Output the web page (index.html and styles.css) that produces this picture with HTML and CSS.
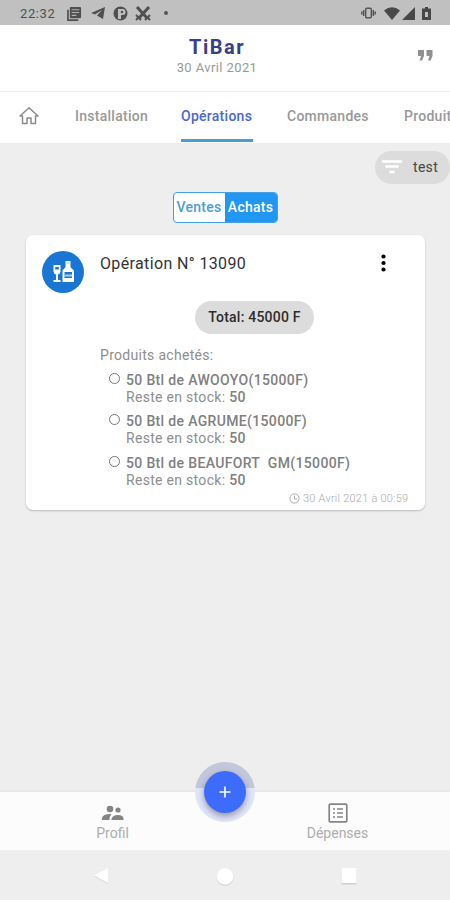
FILE: index.html
```html
<!DOCTYPE html>
<html lang="fr">
<head>
<meta charset="utf-8">
<title>TiBar</title>
<link rel="stylesheet" href="styles.css">
</head>
<body>
<div class="status">
  <span class="clock">22:32</span>
  <svg class="st-news" width="15" height="15" viewBox="0 0 16 16"><path d="M1 4v11h11" fill="none" stroke="#505050" stroke-width="1.800"/><rect x="3" y="1" width="12" height="12" rx="1" fill="#505050"/><path d="M5 4h8M5 7h8M5 10h5" stroke="#b0b0b0" stroke-width="1.100"/></svg>
  <svg class="st-plane" width="16" height="14" viewBox="0 0 16 14"><path d="M15 1 1 7l4 1.500L12 4 7 9.500l6 3.500z" fill="#505050"/></svg>
  <svg class="st-p" width="15" height="15" viewBox="0 0 15 15"><circle cx="7.500" cy="7.500" r="7" fill="#505050"/><path d="M5 3h4.500a2.600 2.600 0 0 1 0 6H8v4H5z" fill="#c0c0c0"/><circle cx="9" cy="6" r="1.300" fill="#505050"/></svg>
  <svg class="st-x" width="16" height="15" viewBox="0 0 16 15"><path d="m2 1 10 11M14 1 4 12" stroke="#505050" stroke-width="3"/><path d="m1 9 5 5M10 14l5-5M1 14l3-3M15 14l-3-3" stroke="#505050" stroke-width="2"/></svg>
  <i class="st-dot"></i>
  <span class="grow"></span>
  <svg class="st-vib" width="15" height="12" viewBox="0 0 15 12"><rect x="4.700" y="1.200" width="5.600" height="9.600" rx="1" fill="none" stroke="#555" stroke-width="1.400"/><path d="M2.700 3v6M.8 4.500v3M12.300 3v6M14.200 4.500v3" stroke="#555" stroke-width="1.500"/></svg>
  <svg class="st-wifi" width="16" height="13" viewBox="0 0 16 13"><path d="M0 3.500Q8-3 16 3.500L8 13z" fill="#484848"/></svg>
  <svg class="st-cell" width="13" height="13" viewBox="0 0 13 13"><path d="M13 0v13H0z" fill="#484848"/></svg>
  <svg class="st-bat" width="9" height="13" viewBox="0 0 9 13"><path d="M3 0h3v1.500h3V13H0V1.500h3z" fill="#484848"/><path d="M3 5h3v5H3z" fill="#c0c0c0"/></svg>
</div>
<header class="header">
  <div class="titles"><h1>TiBar</h1><p>30 Avril 2021</p></div>
  <svg class="quote" width="16" height="11" viewBox="0 0 16 11"><path d="M1 0h6v6L5 10.500H2.500L4 6H1zM9.500 0h6v6l-2 4.500H11L12.500 6h-3z" fill="#909090"/></svg>
</header>
<nav class="tabs">
  <svg class="home" width="20" height="19" viewBox="0 0 20 19"><path d="M1 10 10 1.700 19 10h-2.500v7.500H12V12H8v5.500H3.500V10z" fill="none" stroke="#8b8b8b" stroke-width="1.500" stroke-linejoin="round"/></svg>
  <a class="t-inst">Installation</a><a class="t-ops">Opérations</a><a class="t-com">Commandes</a><a class="t-prod">Produits</a>
</nav>
<main class="content">
  <div class="chip">
    <svg width="20" height="14" viewBox="0 0 20 14"><path d="M0 1.500h20M3.500 6.500h13M7.500 12h5" stroke="#fff" stroke-width="2.400"/></svg>
    <span>test</span>
  </div>
  <div class="segment"><span class="seg">Ventes</span><span class="seg on">Achats</span></div>
  <section class="card">
    <div class="avatar">
      <svg width="21" height="22" viewBox="0 0 21 22"><path fill="#fff" d="M.5 4h7v6.500Q7 13 5 13.500V19h2.500v2H.5v-2H3v-5.500Q1 13 .5 10.500zM12.500 0h5v6.200L21 9.500V21H9.500V9.500l3-3.300z"/><path d="M2.200 6h3.600v2.500H2.200z" fill="#1976d2"/><path d="M11.500 11h7.500v6h-7.500z" fill="#1976d2"/><path d="M11.500 13.500h7.500v2h-7.500zM12.500 1.600h5v1h-5z" fill="#a9d0f5"/></svg>
    </div>
    <div class="body">
      <div class="card-head"><h2>Opération N° 13090</h2>
        <svg width="5" height="18" viewBox="0 0 5 18"><circle cx="2.500" cy="2.500" r="2.100"/><circle cx="2.500" cy="9" r="2.100"/><circle cx="2.500" cy="15.500" r="2.100"/></svg>
      </div>
      <div class="total">Total: 45000 F</div>
      <p class="label">Produits achetés:</p>
      <ul class="items">
        <li><i></i><div><b>50 Btl de AWOOYO(15000F)</b><span>Reste en stock: <b>50</b></span></div></li>
        <li><i></i><div><b>50 Btl de AGRUME(15000F)</b><span>Reste en stock: <b>50</b></span></div></li>
        <li><i></i><div><b>50 Btl de BEAUFORT&nbsp; GM(15000F)</b><span>Reste en stock: <b>50</b></span></div></li>
      </ul>
      <div class="date"><svg width="11" height="11" viewBox="0 0 11 11"><circle cx="5.500" cy="5.500" r="4.600" fill="none" stroke="#aaa"/><path d="M5.500 2.500V6H8" fill="none" stroke="#aaa"/></svg><span>30 Avril 2021 à 00:59</span></div>
    </div>
  </section>
</main>
<footer class="bottom">
  <a class="item profil"><svg width="22" height="16" viewBox="0 0 22 16"><g fill="#858585"><circle cx="8" cy="4" r="3.300"/><circle cx="16" cy="5" r="2.600"/><path d="M0 15v-2q1-4 8-4 .9 0 1.500.2Q7.500 11 7.500 15zM9.500 15v-1.200Q10.500 10 16 10t5.500 3.800V15z"/></g></svg><span>Profil</span></a>
  <a class="item depenses"><svg width="20" height="20" viewBox="0 0 20 20"><rect x="1.200" y="1.200" width="17.600" height="17.600" rx="1" fill="none" stroke="#858585" stroke-width="1.700"/><path d="M5 6h2M5 10h2M5 14h2M9 6h6M9 10h6M9 14h6" stroke="#858585" stroke-width="1.600"/></svg><span>Dépenses</span></a>
  <div class="halo"><div class="fab"><svg width="12" height="12" viewBox="0 0 12 12"><path d="M6 .5v11M.5 6h11" stroke="#fff" stroke-width="1.600"/></svg></div></div>
</footer>
<div class="sysnav">
  <svg class="back" width="16" height="18" viewBox="0 0 16 18"><path d="M15 2v15L1 9.500z" fill="#d8d8d8"/><path d="M15 1v15L1 8.500z" fill="#fff"/></svg>
  <svg class="circle" width="18" height="20" viewBox="0 0 18 20"><circle cx="9" cy="10.500" r="8.500" fill="#d6d6d6"/><circle cx="9" cy="9.500" r="8.300" fill="#fff"/></svg>
  <svg class="square" width="16" height="18" viewBox="0 0 16 18"><path d="M.5 2h15v15.500H.5z" fill="#d0d0d0"/><path d="M.5 1h15v15H.5z" fill="#fff"/></svg>
</div>
</body>
</html>
```
FILE: styles.css
```css
* { box-sizing: border-box; }
body { margin: 0; width: 450px; height: 900px; overflow: hidden; display: flex; flex-direction: column; background: #eee; font-family: Roboto, sans-serif; color: #8e8e8e; }
h1, h2, p, ul { margin: 0; padding: 0; font-weight: 400; }
svg { flex: none; display: block; }
.status { height: 25px; flex: none; background: #c0c0c0; display: flex; align-items: center; padding: 1px 19px 0 20px; }
.clock { font-size: 13px; letter-spacing: .6px; color: #505050; width: 47px; }
.st-plane { margin-left: 8px; }
.st-p { margin-left: 7px; }
.st-x { margin-left: 7px; }
.st-dot { width: 4px; height: 4px; border-radius: 50%; background: #555; margin-left: 13px; }
.grow { flex: 1; }
.st-wifi { margin-left: 8px; }
.st-cell { margin-left: 2px; }
.st-bat { margin-left: 7px; }
.header { height: 67px; flex: none; background: #fff; border-bottom: 1px solid #f0f0f0; display: grid; grid-template-columns: 1fr auto 1fr; }
.titles { grid-column: 2; text-align: center; padding: 10px 0 0; transform: translateX(-8px); }
h1 { font-size: 20px; line-height: 24px; font-weight: 700; letter-spacing: 1.500px; color: #36408a; }
.titles p { font-size: 13px; line-height: 18px; letter-spacing: .4px; color: #999; }
.quote { justify-self: end; margin: 25px 17px 0 0; }
.tabs { height: 50.500px; flex: none; background: #fff; display: flex; font-size: 14px; font-weight: 500; line-height: 48px; letter-spacing: .27px; color: #999; white-space: nowrap; }
.tabs a { flex: none; height: 50px; }
.home { margin: 14px 36px 0 19px; }
.t-inst { width: 73px; margin-right: 33px; }
.tabs .t-ops { width: 72px; margin-right: 34px; color: #4967cf; border-bottom: 3px solid #479dd8; }
.t-com { width: 82px; margin-right: 35px; }
.content { flex: 1; min-height: 0; display: flex; flex-direction: column; }
.chip { align-self: flex-end; margin-top: 8px; width: 75px; height: 33px; border-radius: 17px; background: #dcdcdc; display: flex; align-items: center; padding-left: 7px; gap: 11px; color: #444; font-size: 14px; letter-spacing: .3px; }
.segment { align-self: center; margin-top: 8px; display: flex; width: 105px; height: 31px; border: 1px solid #42a1e5; border-radius: 4px; overflow: hidden; background: #fff; font-size: 14px; font-weight: 500; line-height: 29px; letter-spacing: .25px; text-align: center; color: #4c9ed4; }
.seg { width: 52px; }
.seg.on { background: #2196f3; color: #fff; width: 53px; }
.card { margin: 12px 25px 0 26px; height: 275px; background: #fff; border-radius: 7px; box-shadow: 0 1px 2px #bbb; display: flex; padding: 16px; }
.avatar { width: 42px; height: 42px; border-radius: 50%; background: #1976d2; display: grid; place-items: center; flex: none; }
.body { flex: 1; margin-left: 16px; display: flex; flex-direction: column; }
.card-head { display: flex; justify-content: space-between; align-items: center; height: 25px; margin-top: 3px; padding-right: 23px; }
h2 { font-size: 16px; color: #333; letter-spacing: .36px; white-space: nowrap; }
.total { align-self: center; margin: 28px 0 0 0; width: 119px; height: 33px; border-radius: 17px; background: #dcdcdc; color: #2c2c2c; font-size: 14px; font-weight: 500; line-height: 33px; letter-spacing: .22px; text-align: center; white-space: nowrap; }
.label { margin-top: 12px; font-size: 14px; line-height: 18px; letter-spacing: .3px; }
.items { list-style: none; margin-top: 8px; padding-left: 9px; }
.items li { display: flex; height: 41.700px; font-size: 14px; line-height: 17px; letter-spacing: .3px; white-space: pre; }
.items i { width: 11px; height: 11px; border: 1.500px solid #777; border-radius: 50%; margin: 1px 6px 0 0; }
.items li div { display: flex; flex-direction: column; }
.items b { font-weight: 500; color: #808080; letter-spacing: .34px; }
.date { display: flex; gap: 3px; align-items: center; margin: -5px 0 0 189px; font-size: 11px; line-height: 13px; letter-spacing: .23px; color: #aaa; font-weight: 300; white-space: nowrap; }
.bottom { position: relative; height: 58px; flex: none; background: #fcfcfc; display: grid; grid-template-columns: 1fr 1fr; box-shadow: 0 -1px 2px #e4e4e4; }
.item { display: flex; flex-direction: column; align-items: center; font-size: 14px; line-height: 18px; color: #adadad; }
.profil { padding-top: 13px; }
.profil span { margin-top: 3px; }
.depenses { padding-top: 11px; }
.depenses span { margin-top: 1px; }
.halo { position: absolute; left: 195px; top: -30px; width: 60px; height: 60px; border-radius: 50%; background: linear-gradient(#c3c7dc 0 26px, #e1e5fa 26px); display: grid; place-items: center; }
.fab { width: 42px; height: 42px; border-radius: 50%; background: #3d6bfb; display: grid; place-items: center; box-shadow: 0 3px 6px rgba(0,0,0,.35); }
.sysnav { height: 50px; flex: none; display: flex; padding: 16px 93px 0 93px; justify-content: space-between; border-top: 1px solid #f2f2f2; }
```
